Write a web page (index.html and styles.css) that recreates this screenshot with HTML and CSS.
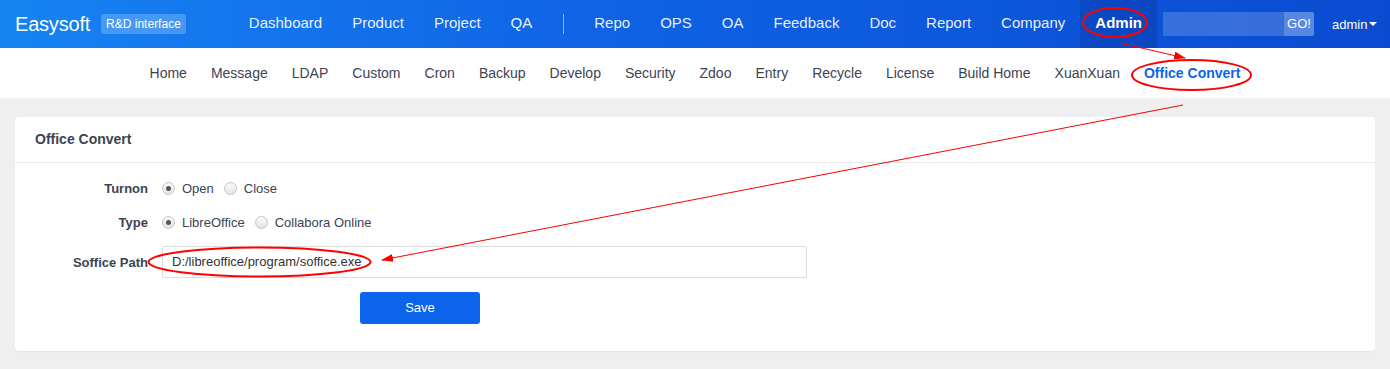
FILE: index.html
```html
<!DOCTYPE html>
<html>
<head>
<meta charset="utf-8">
<title>Office Convert</title>
<link rel="stylesheet" href="styles.css">
</head>
<body>
<header class="topbar">
  <div class="brand">
    <span class="logo">Easysoft</span>
    <span class="badge">R&amp;D interface</span>
  </div>
  <nav class="mainnav">
    <a class="nav-item">Dashboard</a>
    <a class="nav-item">Product</a>
    <a class="nav-item">Project</a>
    <a class="nav-item">QA</a>
    <span class="nav-sep"></span>
    <a class="nav-item">Repo</a>
    <a class="nav-item">OPS</a>
    <a class="nav-item">OA</a>
    <a class="nav-item">Feedback</a>
    <a class="nav-item">Doc</a>
    <a class="nav-item">Report</a>
    <a class="nav-item">Company</a>
    <a class="nav-item active">Admin</a>
  </nav>
  <div class="search">
    <span class="search-input"></span>
    <span class="search-go">GO!</span>
  </div>
  <div class="user">admin<span class="caret"></span></div>
</header>

<nav class="subnav">
  <a class="sub-item">Home</a>
  <a class="sub-item">Message</a>
  <a class="sub-item">LDAP</a>
  <a class="sub-item">Custom</a>
  <a class="sub-item">Cron</a>
  <a class="sub-item">Backup</a>
  <a class="sub-item">Develop</a>
  <a class="sub-item">Security</a>
  <a class="sub-item">Zdoo</a>
  <a class="sub-item">Entry</a>
  <a class="sub-item">Recycle</a>
  <a class="sub-item">License</a>
  <a class="sub-item">Build Home</a>
  <a class="sub-item">XuanXuan</a>
  <a class="sub-item active">Office Convert</a>
</nav>

<main class="content">
  <section class="card">
    <div class="card-head">Office Convert</div>
    <div class="card-body">
      <div class="row">
        <div class="label">Turnon</div>
        <div class="field">
          <span class="opt"><span class="radio checked"></span>Open</span>
          <span class="opt"><span class="radio"></span>Close</span>
        </div>
      </div>
      <div class="row">
        <div class="label">Type</div>
        <div class="field">
          <span class="opt"><span class="radio checked"></span>LibreOffice</span>
          <span class="opt"><span class="radio"></span>Collabora Online</span>
        </div>
      </div>
      <div class="row row-input">
        <div class="label">Soffice Path</div>
        <div class="field">
          <div class="text-input">D:/libreoffice/program/soffice.exe</div>
        </div>
      </div>
      <div class="row row-btn">
        <div class="label"></div>
        <div class="field">
          <span class="btn-save">Save</span>
        </div>
      </div>
    </div>
  </section>
</main>

<svg class="annot" width="1390" height="369" viewBox="0 0 1390 369">
  <defs>
    <marker id="ah" markerWidth="12" markerHeight="8" refX="11" refY="4" orient="auto" markerUnits="userSpaceOnUse">
      <path d="M0,0 L12,4 L0,8 Z" fill="#f00"/>
    </marker>
  </defs>
  <ellipse cx="1115" cy="22.5" rx="32" ry="14.5" fill="none" stroke="#f00" stroke-width="2"/>
  <line x1="1120" y1="43" x2="1185" y2="58" stroke="#f00" stroke-width="1" marker-end="url(#ah)"/>
  <ellipse cx="1191.5" cy="75" rx="59.5" ry="15" fill="none" stroke="#f00" stroke-width="2"/>
  <line x1="1183" y1="105" x2="382" y2="260" stroke="#f00" stroke-width="1" marker-end="url(#ah)"/>
  <ellipse cx="259.5" cy="262" rx="111" ry="14.5" fill="none" stroke="#f00" stroke-width="2"/>
</svg>
</body>
</html>
```

FILE: styles.css
```css
* { box-sizing: border-box; }
html, body { margin: 0; padding: 0; }
body {
  font-family: "Liberation Sans", Arial, sans-serif;
  background: #efefef;
  color: #333;
  width: 1390px;
  height: 369px;
  overflow: hidden;
  position: relative;
}
a { text-decoration: none; }

.topbar {
  height: 48px;
  display: flex;
  align-items: center;
  background: linear-gradient(90deg, #1683f2 0%, #0f62e4 45%, #0a4bd1 100%);
  color: #fff;
}
.brand { display: flex; align-items: center; padding-left: 15px; }
.logo { font-size: 20px; color: #fff; letter-spacing: -0.2px; }
.badge {
  margin-left: 11px;
  font-size: 12px;
  padding: 3px 5px;
  border-radius: 3px;
  background: rgba(255,255,255,0.22);
  color: #fff;
  line-height: 14px;
}
.mainnav { display: flex; align-items: center; height: 48px; margin-left: 48px; }
.nav-item {
  font-size: 15px;
  color: rgba(255,255,255,0.92);
  padding: 0 15px;
  height: 48px;
  line-height: 46px;
}
.nav-item.active {
  font-weight: bold;
  color: #fff;
  background: rgba(8,60,170,0.45);
}
.nav-sep {
  width: 1px;
  height: 20px;
  background: rgba(255,255,255,0.5);
  margin: 0 15px 0 16px;
}
.search { display: flex; margin-left: 6px; height: 24px; }
.search-input { width: 121px; background: rgba(255,255,255,0.18); border-radius: 2px 0 0 2px; }
.search-go {
  width: 30px;
  background: rgba(255,255,255,0.32);
  font-size: 13px;
  line-height: 24px;
  text-align: center;
  color: #fff;
  border-radius: 0 2px 2px 0;
}
.user { margin-left: 18px; font-size: 13px; color: #fff; display: flex; align-items: center; }
.caret {
  display: inline-block;
  margin-left: 2px;
  width: 0; height: 0;
  border-left: 4px solid transparent;
  border-right: 4px solid transparent;
  border-top: 4px solid #fff;
}

.subnav {
  height: 50px;
  background: #fff;
  display: flex;
  justify-content: center;
  align-items: center;
}
.sub-item {
  font-size: 14px;
  color: #3c4353;
  padding: 0 12px;
  line-height: 48px;
}
.sub-item.active { color: #0c64eb; font-weight: bold; }

.content { padding: 19px 15px 0; }
.card {
  background: #fff;
  border-radius: 4px;
  height: 234px;
  box-shadow: 0 1px 1px rgba(0,0,0,0.04);
}
.card-head {
  height: 46px;
  line-height: 45px;
  padding-left: 20px;
  font-size: 14px;
  font-weight: bold;
  color: #3c4353;
  border-bottom: 1px solid #e8e8e8;
}
.card-body { padding-top: 8px; }
.row { display: flex; align-items: center; height: 34px; }
.label {
  width: 133px;
  text-align: right;
  font-size: 13px;
  font-weight: bold;
  color: #3c4353;
  margin-right: 14px;
}
.field { display: flex; align-items: center; font-size: 13px; color: #3c4353; }
.opt { display: flex; align-items: center; margin-right: 10px; }
.radio {
  width: 13px; height: 13px;
  border-radius: 50%;
  border: 1px solid #c4c4c4;
  background: linear-gradient(#fafafa, #e4e4e4);
  margin-right: 7px;
  position: relative;
}
.radio.checked::after {
  content: "";
  position: absolute;
  left: 3px; top: 3px;
  width: 5px; height: 5px;
  border-radius: 50%;
  background: #555;
}
.row-input { height: 32px; margin-top: 7px; }
.text-input {
  width: 645px;
  height: 32px;
  border: 1px solid #dcdcdc;
  border-radius: 2px;
  padding: 0 9px;
  line-height: 30px;
  font-size: 13px;
  color: #333;
}
.row-btn { margin-top: 14px; height: 32px; }
.row-btn .field { padding-left: 198px; }
.btn-save {
  display: block;
  width: 120px;
  height: 32px;
  line-height: 32px;
  text-align: center;
  color: #fff;
  background: #0c64eb;
  border-radius: 3px;
  font-size: 13px;
}

.annot { position: absolute; left: 0; top: 0; pointer-events: none; }
```
